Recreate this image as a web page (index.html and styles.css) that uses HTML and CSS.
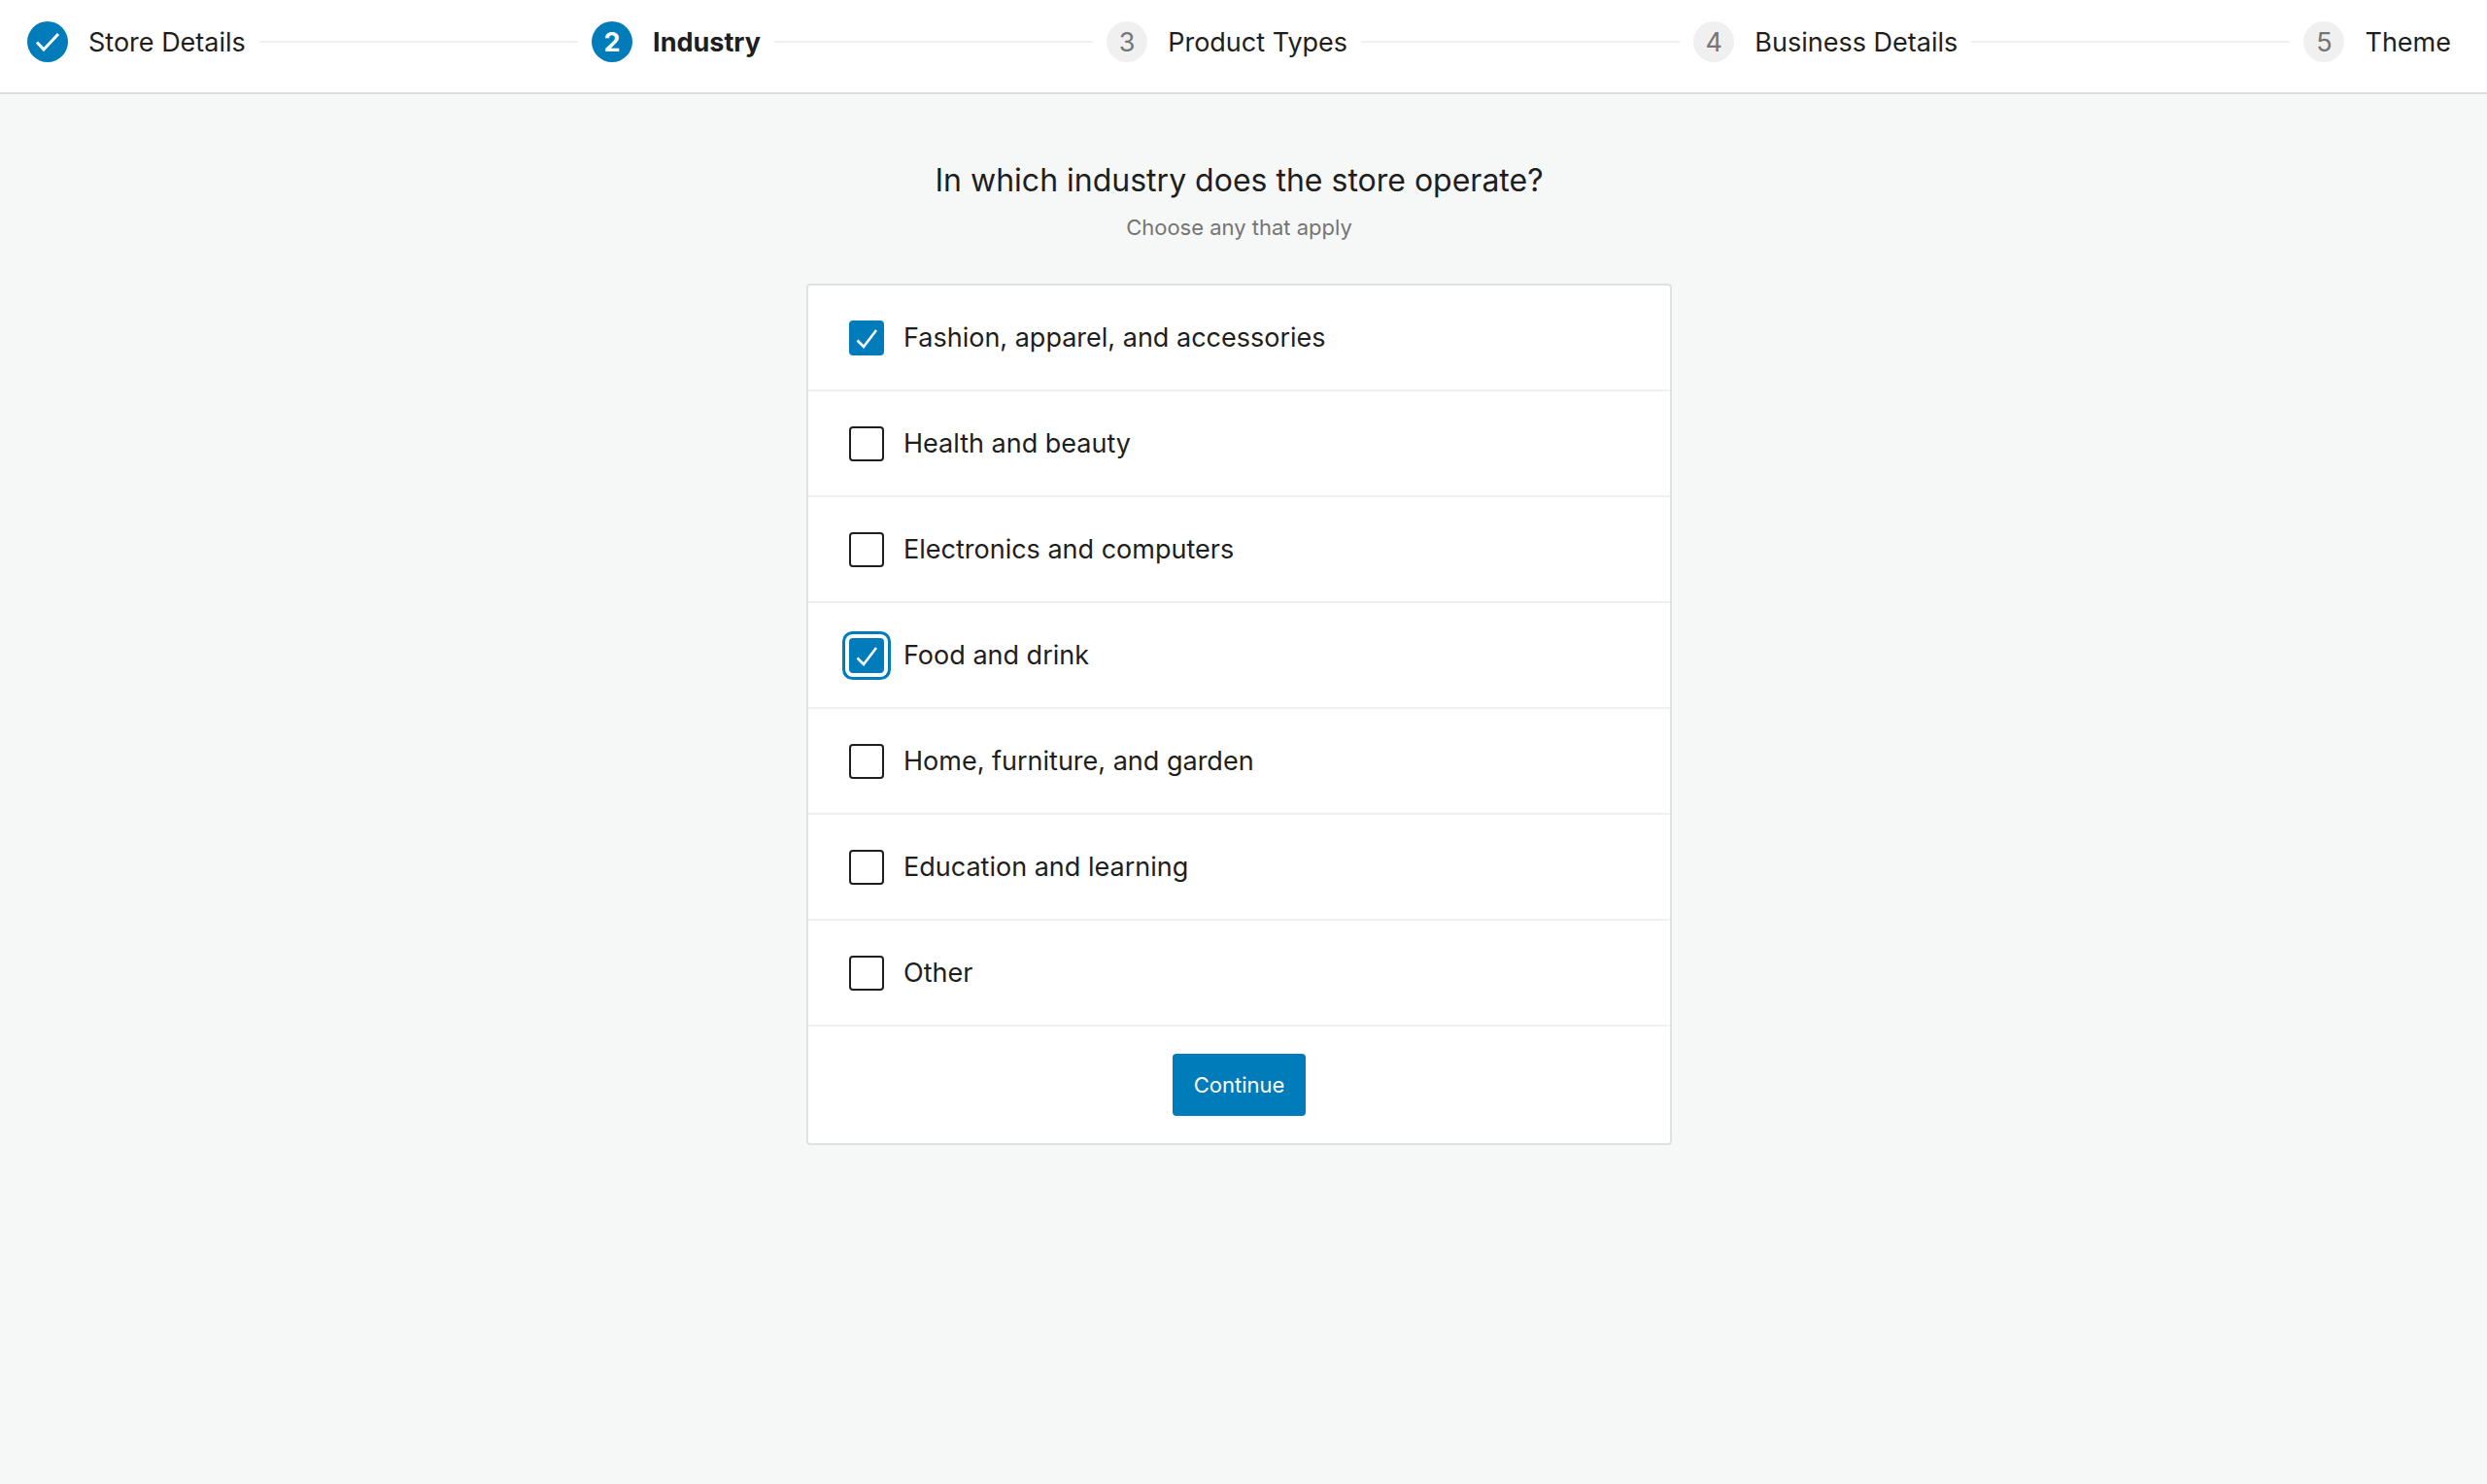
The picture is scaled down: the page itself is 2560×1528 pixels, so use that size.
FILE: index.html
```html
<!DOCTYPE html>
<html lang="en">
<head>
  <meta charset="utf-8">
  <meta name="viewport" content="width=device-width, initial-scale=1">
  <title>Industry</title>
  <link rel="stylesheet" href="styles.css">
</head>
<body>
  <header class="header">
    <ol class="stepper">
      <li class="step step-complete">
        <span class="step-icon">
          <svg viewBox="0 0 42 42" aria-hidden="true"><path d="M10 21.5 17 29 32 13"/></svg>
        </span>
        <span class="step-label">Store Details</span>
      </li>
      <li class="step step-active" aria-current="step">
        <span class="step-icon">2</span>
        <span class="step-label">Industry</span>
      </li>
      <li class="step">
        <span class="step-icon">3</span>
        <span class="step-label">Product Types</span>
      </li>
      <li class="step">
        <span class="step-icon">4</span>
        <span class="step-label">Business Details</span>
      </li>
      <li class="step">
        <span class="step-icon">5</span>
        <span class="step-label">Theme</span>
      </li>
    </ol>
  </header>

  <main class="main">
    <h1 class="title">In which industry does the store operate?</h1>
    <p class="subtitle">Choose any that apply</p>

    <form class="card">
      <label class="option"><input class="checkbox" type="checkbox" checked>Fashion, apparel, and accessories</label>
      <label class="option"><input class="checkbox" type="checkbox">Health and beauty</label>
      <label class="option"><input class="checkbox" type="checkbox">Electronics and computers</label>
      <label class="option"><input class="checkbox checkbox-focused" type="checkbox" checked>Food and drink</label>
      <label class="option"><input class="checkbox" type="checkbox">Home, furniture, and garden</label>
      <label class="option"><input class="checkbox" type="checkbox">Education and learning</label>
      <label class="option"><input class="checkbox" type="checkbox">Other</label>
      <div class="card-footer">
        <button class="button" type="button">Continue</button>
      </div>
    </form>
  </main>
</body>
</html>
```
FILE: styles.css
```css
:root {
  --blue: #007cba;
  --text: #1e1e1e;
  --muted: #757575;
  --border: #e0e2e2;
  --divider: #f0f0f0;
  --gutter: 9px;
}

* {
  box-sizing: border-box;
}

body {
  margin: 0;
  min-height: 100vh;
  background: #f6f7f7;
  color: var(--text);
  font: 27px/42px Inter, "Liberation Sans", sans-serif;
}

/* Progress header */
.header {
  padding: 21px 37px 30px 28px;
  background: #fff;
  border-bottom: 2px solid #dddfdf;
}

.stepper {
  display: flex;
  gap: 14px;
  margin: 0;
  padding: 0;
  list-style: none;
}

.step {
  display: flex;
  flex: 1 0 auto;
  align-items: center;
}

.step:last-child {
  flex-grow: 0;
}

.step:not(:last-child)::after {
  content: "";
  flex: 1;
  height: 2px;
  margin-left: 14px;
  background: var(--divider);
}

.step-icon {
  width: 42px;
  height: 42px;
  margin-right: 21px;
  border-radius: 50%;
  background: #f0f0f0;
  color: var(--muted);
  line-height: 44px;
  text-align: center;
}

.step-label {
  padding-top: 2px;
}

.step-icon svg {
  display: block;
  fill: none;
  stroke: #fff;
  stroke-width: 3;
}

.step-complete .step-icon,
.step-active .step-icon {
  background: var(--blue);
  color: #fff;
}

.step-active {
  font-weight: 700;
}

/* Question */
.main {
  display: flex;
  flex-direction: column;
  align-items: center;
  padding: 67px var(--gutter) 67px 0;
}

.title {
  margin: 0 0 10px;
  font-size: 32px;
  font-weight: 400;
  line-height: 44px;
}

.subtitle {
  margin: 0 0 42px;
  color: var(--muted);
  font-size: 22px;
  line-height: 32px;
}

.card {
  width: 100%;
  max-width: 891px;
  background: #fff;
  border: 2px solid var(--border);
  border-radius: 4px;
}

.option {
  display: flex;
  align-items: center;
  gap: 20px;
  height: 109px;
  padding: 0 42px;
  border-bottom: 2px solid var(--divider);
}

.checkbox {
  appearance: none;
  flex: none;
  width: 36px;
  height: 36px;
  margin: 0;
  border: 2px solid var(--text);
  border-radius: 4px;
  background: #fff;
}

.checkbox:checked {
  border-color: var(--blue);
  background: var(--blue) url("data:image/svg+xml,%3Csvg xmlns='http://www.w3.org/2000/svg' viewBox='0 0 36 36'%3E%3Cpath d='M8.5 20.5 15 27 28 10' fill='none' stroke='white' stroke-width='2.6'/%3E%3C/svg%3E") border-box center / 36px no-repeat;
}

.checkbox-focused {
  box-shadow: 0 0 0 4px #fff, 0 0 0 7px var(--blue);
}

.card-footer {
  display: flex;
  justify-content: center;
  padding: 28px;
}

.button {
  padding: 0 22px;
  border: 0;
  border-radius: 4px;
  background: var(--blue);
  color: #fff;
  font: inherit;
  font-size: 22px;
  line-height: 64px;
}
```
